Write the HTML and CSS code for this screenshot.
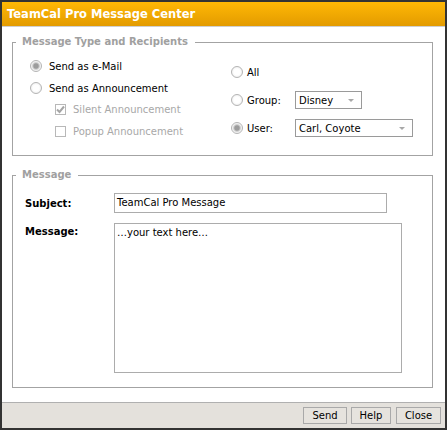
FILE: index.html
```html
<!DOCTYPE html>
<html>
<head>
<meta charset="utf-8">
<link rel="stylesheet" href="styles.css">
</head>
<body>
<div class="win">
  <div class="titlebar">TeamCal Pro Message Center</div>
  <div class="content">
    <fieldset class="box box-type">
      <legend>Message Type and Recipients</legend>
      <div class="cols">
        <div class="col-left">
          <div class="row"><span class="radio on"></span><span class="lbl">Send as e-Mail</span></div>
          <div class="row"><span class="radio"></span><span class="lbl">Send as Announcement</span></div>
          <div class="row row-sub row-short"><span class="check on"><svg width="9" height="9" viewBox="0 0 9 9"><polyline points="1,4.5 3.5,7 8,1.5" fill="none" stroke="#a5a5a5" stroke-width="2"/></svg></span><span class="lbl dis">Silent Announcement</span></div>
          <div class="row row-sub"><span class="check"></span><span class="lbl dis">Popup Announcement</span></div>
        </div>
        <div class="col-right">
          <div class="rrow"><span class="radio"></span><span class="rlbl">All</span></div>
          <div class="rrow"><span class="radio"></span><span class="rlbl wide">Group:</span><span class="select sel-group"><span>Disney</span><span class="arrow"></span></span></div>
          <div class="rrow"><span class="radio on"></span><span class="rlbl wide">User:</span><span class="select sel-user"><span>Carl, Coyote</span><span class="arrow"></span></span></div>
        </div>
      </div>
    </fieldset>
    <fieldset class="box box-msg">
      <legend>Message</legend>
      <div class="form">
        <div class="flabel">Subject:</div>
        <div class="input">TeamCal Pro Message</div>
        <div class="flabel flabel-msg">Message:</div>
        <div class="textarea">…your text here…</div>
      </div>
    </fieldset>
  </div>
  <div class="footer">
    <span class="btn btn-send">Send</span>
    <span class="btn btn-help">Help</span>
    <span class="btn btn-close">Close</span>
  </div>
</div>
</body>
</html>
```
FILE: styles.css
```css
html, body {
  margin: 0;
  padding: 0;
  background: #fff;
}
body {
  font-family: "DejaVu Sans", Verdana, sans-serif;
  font-size: 10px;
  color: #000;
}
.win {
  width: 447px;
  height: 430px;
  box-sizing: border-box;
  border: 2px solid #333;
  display: flex;
  flex-direction: column;
  background: #fff;
}
.titlebar {
  height: 24px;
  line-height: 24px;
  padding-left: 5px;
  color: #fff;
  font-weight: bold;
  font-size: 11.5px;
  background: linear-gradient(#ffb805, #e39b00);
  border-bottom: 1px solid #cfcfcf;
}
.content {
  padding: 8px 12px 0 10px;
}
.box {
  margin: 0;
  padding: 0;
  border: 1px solid #a3a3a3;
  min-width: 0;
}
.box legend {
  margin-left: 3px;
  padding: 0 7px 0 6px;
  line-height: 14px;
  font-weight: bold;
  font-size: 10px;
  color: #a0a0a0;
}
.box-type {
  height: 121px;
  box-sizing: border-box;
}
.cols {
  display: flex;
  padding-top: 6px;
}
.col-left {
  width: 201px;
  padding-left: 17px;
}
.row {
  height: 22px;
  display: flex;
  align-items: center;
}
.row-short {
  height: 21px;
}
.row-sub {
  padding-left: 25px;
}
.lbl {
  margin-left: 7px;
}
.dis {
  color: #a8a8a8;
}
.radio {
  width: 12px;
  height: 12px;
  box-sizing: border-box;
  border-radius: 50%;
  border: 1px solid #b4b4b4;
  background: radial-gradient(circle at 50% 50%, #fff 0, #fff 3px, #f2f2f2 5px);
  flex: none;
}
.radio.on {
  background: radial-gradient(circle at 50% 50%, #9c9c9c 0, #9c9c9c 2.2px, #c8c8c8 3.2px, #ececec 4.2px, #fafafa 5px);
}
.check {
  width: 11px;
  height: 11px;
  box-sizing: border-box;
  border: 1px solid #b8b8b8;
  background: #fff;
  display: flex;
  align-items: center;
  justify-content: center;
  flex: none;
}
.col-right {
  display: flex;
  flex-direction: column;
  gap: 10px;
  padding-top: 8px;
}
.rrow {
  height: 18px;
  display: flex;
  align-items: center;
}
.rlbl {
  margin-left: 4px;
}
.rlbl.wide {
  width: 48px;
}
.select {
  height: 18px;
  box-sizing: border-box;
  border: 1px solid #9a9a9a;
  background: #fff;
  display: flex;
  align-items: center;
  justify-content: space-between;
  padding: 0 7px 0 3px;
}
.sel-group {
  width: 67px;
}
.sel-user {
  width: 118px;
}
.arrow {
  width: 0;
  height: 0;
  border-left: 3px solid transparent;
  border-right: 3px solid transparent;
  border-top: 3px solid #a8a8a8;
  margin-top: 1px;
}
.box-msg {
  margin-top: 12px;
  padding: 0 0 14px 0;
}
.form {
  display: grid;
  grid-template-columns: 89px auto;
  row-gap: 10px;
  padding: 11px 0 0 12px;
  align-items: center;
}
.flabel {
  font-weight: bold;
}
.flabel-msg {
  align-self: start;
  padding-top: 3px;
}
.input {
  width: 273px;
  height: 20px;
  box-sizing: border-box;
  border: 1px solid #acacac;
  padding-left: 2px;
  line-height: 18px;
}
.textarea {
  width: 288px;
  height: 150px;
  box-sizing: border-box;
  border: 1px solid #acacac;
  padding: 2px 2px;
  line-height: 14px;
}
.footer {
  margin-top: auto;
  height: 25px;
  border-top: 1px solid #b0b0b0;
  background: #e4e1dc;
  display: flex;
  justify-content: flex-end;
  align-items: center;
  padding-right: 4px;
}
.btn {
  height: 17px;
  box-sizing: border-box;
  border: 1px solid #a9a9a9;
  background: #e6e3de;
  display: flex;
  align-items: center;
  justify-content: center;
  font-size: 10px;
}
.btn-send {
  width: 44px;
}
.btn-help {
  width: 40px;
  margin-left: 4px;
}
.btn-close {
  width: 45px;
  margin-left: 5px;
}
```
